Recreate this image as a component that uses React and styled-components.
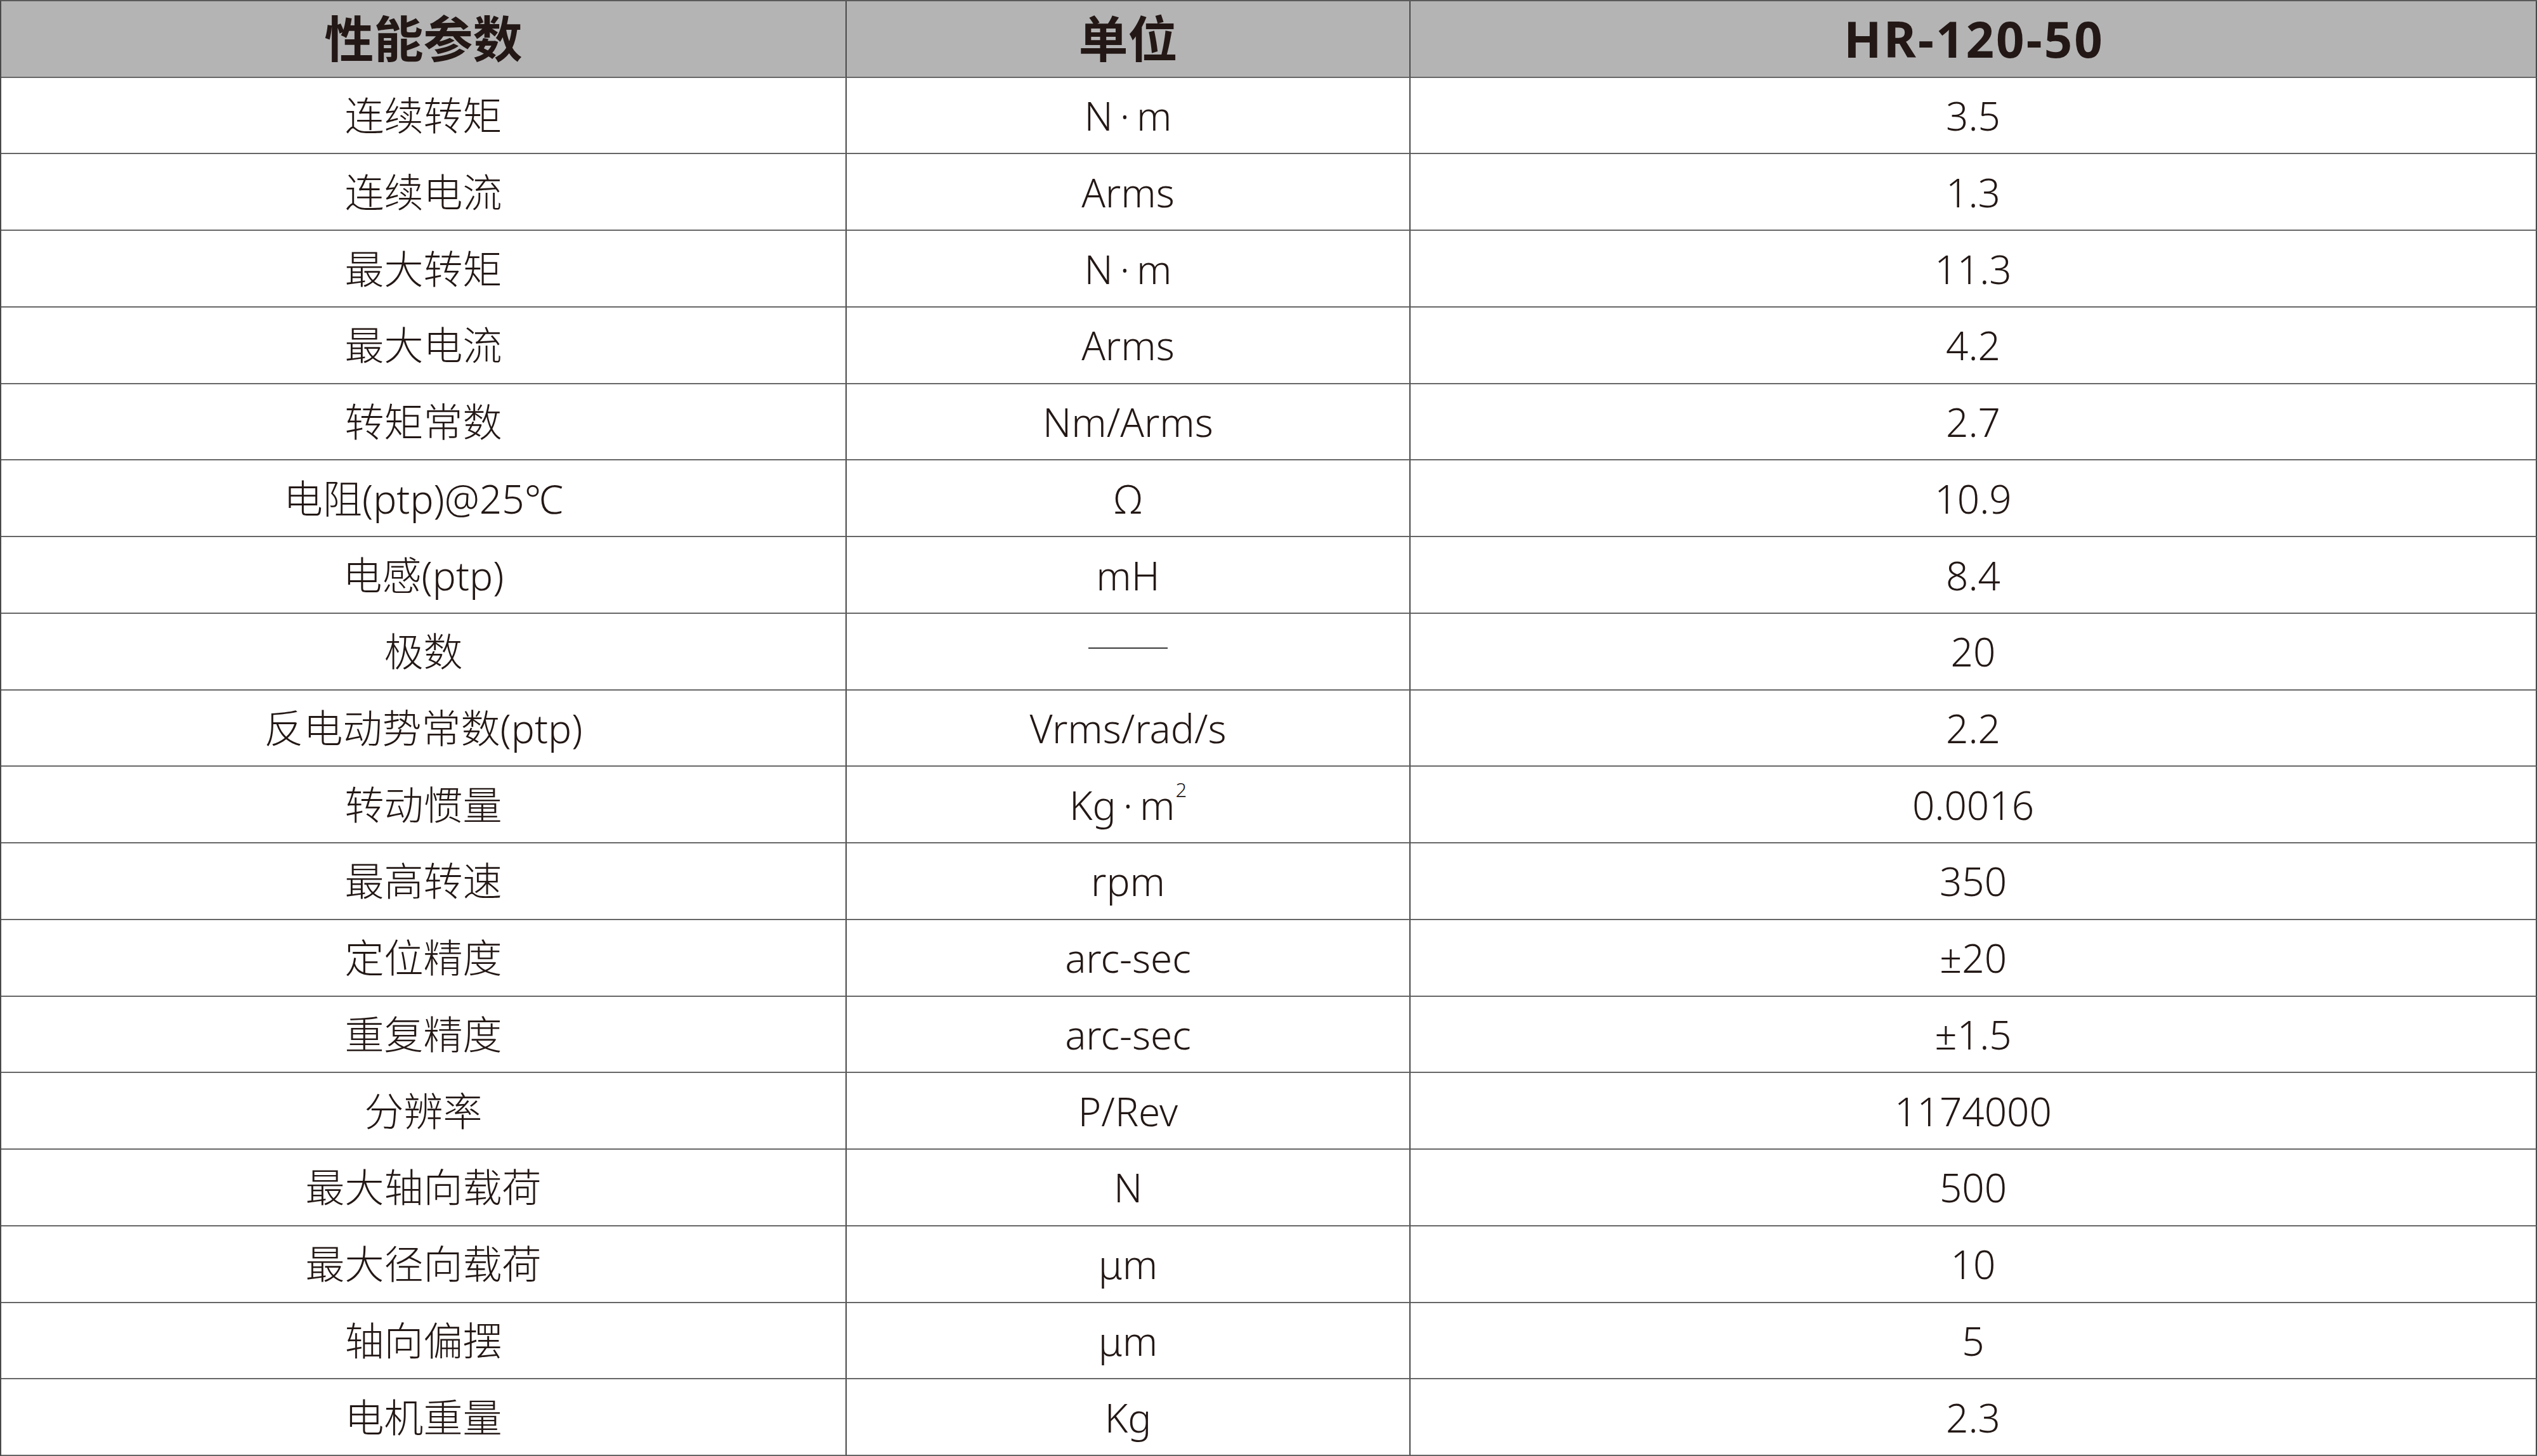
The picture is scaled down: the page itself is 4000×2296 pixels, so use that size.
import React from "react";
import styled, { createGlobalStyle } from "styled-components";

const Global = createGlobalStyle`
  html, body { margin: 0; padding: 0; background: #ffffff; }
  * { box-sizing: border-box; }
`;

const Table = styled.div`
  width: 4000px;
  height: 2296px;
  display: grid;
  grid-template-columns: 1333px 889px 1776px;
  grid-template-rows: repeat(19, 1fr);
  border-top: 2px solid #5a5a5a;
  border-left: 2px solid #4a4a4a;
  font-family: "Noto Sans", "Noto Sans CJK SC", sans-serif;
  color: #231815;
`;

const Cell = styled.div`
  display: flex;
  align-items: center;
  justify-content: center;
  border-right: 2px solid #4a4a4a;
  border-bottom: 2px solid #666666;
  background: ${(p) => (p.$head ? "#b4b4b5" : "#ffffff")};
  font-size: ${(p) => (p.$head ? "78px" : "62px")};
  font-weight: ${(p) => (p.$head ? 700 : 300)};
  letter-spacing: ${(p) => p.$spacing || "0"};
  padding-left: ${(p) => p.$spacing || "0"};
  white-space: nowrap;
  line-height: 1;
`;

const Sup = styled.sup`
  font-size: 0.5em;
  vertical-align: 0;
  position: relative;
  top: -0.75em;
  margin-left: 1px;
`;

const Dot = styled.span`
  margin: 0 0.18em;
`;

const Dash = styled.span`
  display: block;
  width: 125px;
  height: 2px;
  background: #3a3a3a;
  margin-top: -10px;
`;

const Nm = () => (
  <>
    N<Dot>·</Dot>m
  </>
);

const rows = [
  ["连续转矩", <Nm />, "3.5"],
  ["连续电流", "Arms", "1.3"],
  ["最大转矩", <Nm />, "11.3"],
  ["最大电流", "Arms", "4.2"],
  ["转矩常数", "Nm/Arms", "2.7"],
  ["电阻(ptp)@25℃", "Ω", "10.9"],
  ["电感(ptp)", "mH", "8.4"],
  ["极数", <Dash />, "20"],
  ["反电动势常数(ptp)", "Vrms/rad/s", "2.2"],
  [
    "转动惯量",
    <>
      Kg<Dot>·</Dot>m<Sup>2</Sup>
    </>,
    "0.0016",
  ],
  ["最高转速", "rpm", "350"],
  ["定位精度", "arc-sec", "±20"],
  ["重复精度", "arc-sec", "±1.5"],
  ["分辨率", "P/Rev", "1174000"],
  ["最大轴向载荷", "N", "500"],
  ["最大径向载荷", "μm", "10"],
  ["轴向偏摆", "μm", "5"],
  ["电机重量", "Kg", "2.3"],
];

export default function App() {
  return (
    <>
      <Global />
      <Table>
        <Cell $head>性能参数</Cell>
        <Cell $head>单位</Cell>
        <Cell $head $spacing="3px">HR-120-50</Cell>
        {rows.map((r, i) => (
          <React.Fragment key={i}>
            <Cell>{r[0]}</Cell>
            <Cell>{r[1]}</Cell>
            <Cell>{r[2]}</Cell>
          </React.Fragment>
        ))}
      </Table>
    </>
  );
}
